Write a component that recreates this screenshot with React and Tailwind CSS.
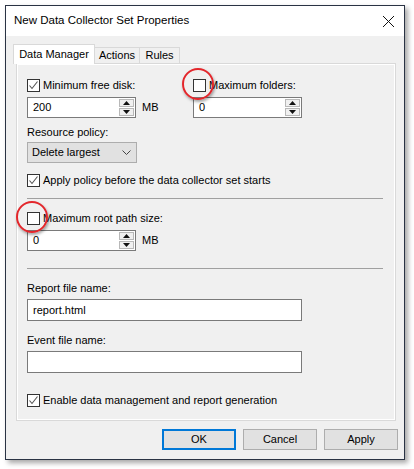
import React from 'react';

const font = { fontFamily: '"Liberation Sans", Arial, sans-serif' };

function Check({ checked, circled }) {
  return (
    <span className="relative inline-flex w-[13px] h-[13px] shrink-0 border border-[#333333] bg-white items-center justify-center">
      {checked && (
        <svg width="11" height="11" viewBox="0 0 11 11">
          <polyline points="1.5,5.5 4,8.5 9.5,1.5" fill="none" stroke="#555555" strokeWidth="1.1" />
        </svg>
      )}
      {circled && (
        <span className="absolute left-[-12px] top-[-12px] w-[32px] h-[32px] rounded-full border-2 border-[#e3262b] shadow-[1px_2px_3px_rgba(0,0,0,0.35)]" />
      )}
    </span>
  );
}

function CheckRow({ label, checked, circled, className = '' }) {
  return (
    <div className={`flex items-center h-[16px] gap-[3px] whitespace-nowrap ${className}`}>
      <Check checked={checked} circled={circled} />
      <span className="leading-none">{label}</span>
    </div>
  );
}

function Spin({ value }) {
  return (
    <div className="flex w-[109px] h-[21px] border border-[#7a7a7a] bg-white">
      <div className="flex-1 flex items-center pl-[5px]">{value}</div>
      <div className="flex flex-col w-[16px] py-[1px] pr-[1px] gap-[1px]">
        <div className="flex-1 flex items-center justify-center bg-[#f0f0f0] border border-[#b8b8b8]">
          <svg width="7" height="4" viewBox="0 0 7 4"><polygon points="0,4 7,4 3.5,0" fill="#111" /></svg>
        </div>
        <div className="flex-1 flex items-center justify-center bg-[#f0f0f0] border border-[#b8b8b8]">
          <svg width="7" height="4" viewBox="0 0 7 4"><polygon points="0,0 7,0 3.5,4" fill="#111" /></svg>
        </div>
      </div>
    </div>
  );
}

function Separator({ className = '' }) {
  return <div className={`h-px w-[356px] bg-[#a0a0a0] ${className}`} />;
}

export default function App() {
  return (
    <div className="w-[414px] h-[469px] bg-white pl-[5px] pt-[5px] text-[11px] text-black" style={font}>
      <div className="w-[400px] h-[455px] border border-[#2a3344] bg-[#f0f0f0] flex flex-col shadow-[3px_3px_5px_rgba(0,0,0,0.35)]">
        {/* Title bar */}
        <div className="h-[30px] bg-white flex items-center justify-between pl-[8px] pr-[9px]">
          <span className="text-[11.5px]">New Data Collector Set Properties</span>
          <svg width="13" height="13" viewBox="0 0 13 13">
            <path d="M1 1 L12 12 M12 1 L1 12" stroke="#111" strokeWidth="1" />
          </svg>
        </div>

        {/* Tabs */}
        <div className="flex items-end h-[27px] pl-[7px] pt-[7px] whitespace-nowrap">
          <div className="h-[20px] w-[82px] bg-white border border-b-0 border-[#d9d9d9] flex items-center justify-center relative z-10 -mb-px">
            Data Manager
          </div>
          <div className="h-[16px] w-[45px] border border-b-0 border-l-0 border-[#d9d9d9] flex items-center justify-center">
            Actions
          </div>
          <div className="h-[16px] w-[40px] border border-b-0 border-l-0 border-[#d9d9d9] flex items-center justify-center">
            Rules
          </div>
        </div>

        {/* Panel */}
        <div className="ml-[10px] w-[380px] border border-[#d9d9d9] shadow-[inset_1px_1px_0_#ffffff,inset_-1px_-1px_0_#ffffff] pl-[10px] pt-[13px] pb-[12px] flex flex-col">
          <div className="flex">
            <div className="w-[166px] flex flex-col">
              <CheckRow label="Minimum free disk:" checked />
              <div className="flex items-center mt-[4px]">
                <Spin value="200" />
                <span className="ml-[6px]">MB</span>
              </div>
            </div>
            <div className="flex flex-col">
              <CheckRow label="Maximum folders:" circled />
              <div className="mt-[4px]">
                <Spin value="0" />
              </div>
            </div>
          </div>

          <div className="mt-[7px] h-[14px] flex items-center">Resource policy:</div>
          <div className="mt-[3px] w-[110px] h-[21px] bg-[#e1e1e1] border border-[#adadad] flex items-center justify-between pl-[4px] pr-[5px]">
            <span>Delete largest</span>
            <svg width="9" height="5" viewBox="0 0 9 5"><polyline points="0.5,0.5 4.5,4.5 8.5,0.5" fill="none" stroke="#444" strokeWidth="1" /></svg>
          </div>

          <CheckRow className="mt-[9px]" label="Apply policy before the data collector set starts" checked />
          <Separator className="mt-[10px]" />

          <CheckRow className="mt-[11px]" label="Maximum root path size:" circled />
          <div className="flex items-center mt-[4px]">
            <Spin value="0" />
            <span className="ml-[6px]">MB</span>
          </div>

          <Separator className="mt-[17px]" />
          <div className="mt-[12px] h-[14px] flex items-center">Report file name:</div>
          <div className="mt-[4px] w-[275px] h-[22px] border border-[#7a7a7a] bg-white flex items-center pl-[5px]">report.html</div>
          <div className="mt-[12px] h-[14px] flex items-center">Event file name:</div>
          <div className="mt-[4px] w-[275px] h-[22px] border border-[#7a7a7a] bg-white" />

          <CheckRow className="mt-[19px]" label="Enable data management and report generation" checked />
        </div>

        {/* Buttons */}
        <div className="flex justify-end gap-[7px] pr-[6px] mt-[8px]">
          <button className="w-[74px] h-[21px] bg-[#e1e1e1] border-2 border-[#0078d7]">OK</button>
          <button className="w-[74px] h-[21px] bg-[#e1e1e1] border border-[#adadad]">Cancel</button>
          <button className="w-[74px] h-[21px] bg-[#e1e1e1] border border-[#adadad]">Apply</button>
        </div>
      </div>
    </div>
  );
}
